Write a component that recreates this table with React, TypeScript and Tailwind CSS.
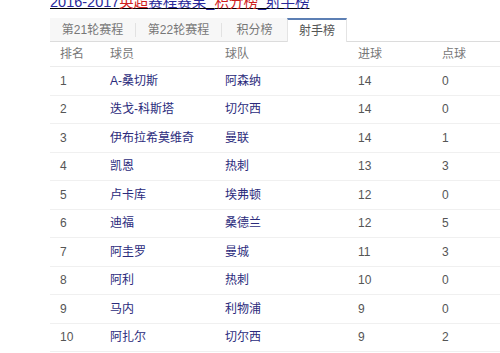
import React from "react";

const tabs = [
  { label: "第21轮赛程", w: "w-[86px]" },
  { label: "第22轮赛程", w: "w-[86px]" },
  { label: "积分榜", w: "w-[65px]" },
  { label: "射手榜", w: "w-[60px]", active: true },
];

const rows = [
  ["1", "A-桑切斯", "阿森纳", "14", "0"],
  ["2", "迭戈-科斯塔", "切尔西", "14", "0"],
  ["3", "伊布拉希莫维奇", "曼联", "14", "1"],
  ["4", "凯恩", "热刺", "13", "3"],
  ["5", "卢卡库", "埃弗顿", "12", "0"],
  ["6", "迪福", "桑德兰", "12", "5"],
  ["7", "阿圭罗", "曼城", "11", "3"],
  ["8", "阿利", "热刺", "10", "0"],
  ["9", "马内", "利物浦", "9", "0"],
  ["10", "阿扎尔", "切尔西", "9", "2"],
];

export default function App() {
  return (
    <div
      className="w-[500px] h-[353px] overflow-hidden bg-white"
      style={{ fontFamily: '"Liberation Sans", "Noto Sans CJK SC", sans-serif' }}
    >
      {/* Title link, cut off at the top like the screenshot */}
      <div className="pl-[50px] -mt-[6px] h-[16px] text-[14.5px] leading-[16px] underline">
        <span className="text-[#2a2a9a]">2016-2017</span>
        <span className="text-[#d02020]">英超</span>
        <span className="text-[#2a2a9a]">赛程赛果_</span>
        <span className="text-[#d02020]">积分榜</span>
        <span className="text-[#2a2a9a]">_射手榜</span>
      </div>

      {/* Tabs */}
      <div className="ml-[50px] mt-[8px] flex h-[24px] border-b border-[#dcdcdc]">
        <div className="flex bg-[#f7f7f7]">
          {tabs.map((t, i) =>
            t.active ? (
              <div
                key={t.label}
                className={`${t.w} -mb-px flex items-center justify-center border-t-2 border-x border-t-[#5c7fb4] border-x-[#e4e4e4] bg-white text-[12px] text-[#555]`}
              >
                {t.label}
              </div>
            ) : (
              <div key={t.label} className={`${t.w} flex items-center`}>
                <span className="flex-1 text-center text-[12px] text-[#777]">{t.label}</span>
                {i < 2 && <span className="h-[14px] w-px bg-[#e2e2e2]" />}
              </div>
            )
          )}
        </div>
      </div>

      {/* Table */}
      <div className="ml-[50px] text-[12px]">
        <div className="flex h-[25px] items-center border-b border-[#ececec] text-[#777]">
          <div className="w-[60px] pl-[10px]">排名</div>
          <div className="w-[115px]">球员</div>
          <div className="w-[133px]">球队</div>
          <div className="w-[84px]">进球</div>
          <div>点球</div>
        </div>
        {rows.map((r) => (
          <div key={r[0]} className="flex h-[28.5px] items-center border-b border-[#f0f0f0]">
            <div className="w-[60px] pl-[10px] text-[#555]">{r[0]}</div>
            <div className="w-[115px] text-[#2b2b7c]">{r[1]}</div>
            <div className="w-[133px] text-[#2b2b7c]">{r[2]}</div>
            <div className="w-[84px] text-[#555]">{r[3]}</div>
            <div className="text-[#555]">{r[4]}</div>
          </div>
        ))}
      </div>
    </div>
  );
}
